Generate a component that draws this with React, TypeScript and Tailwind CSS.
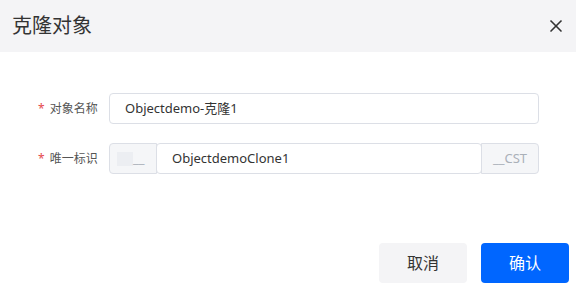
import { X } from "lucide-react";

const font = { fontFamily: '"Noto Sans", "Noto Sans CJK SC", sans-serif' };

export default function App() {
  return (
    <div className="w-[576px] h-[293px] bg-white flex flex-col" style={font}>
      <div className="h-[52px] bg-[#f4f4f6] flex items-center justify-between pl-3 pr-[10px]">
        <span className="text-[20px] text-[#333] leading-none">克隆对象</span>
        <X size={20} strokeWidth={2} className="text-[#333]" />
      </div>

      <div className="flex flex-col gap-[19px] pt-[41px] pl-[38px] pr-[37px]">
        <div className="flex items-center">
          <label className="w-[71px] text-[12px] text-[#555] flex items-center">
            <span className="text-[#e5484d] mr-[5px]">*</span>对象名称
          </label>
          <div className="flex-1 h-[31px] border border-[#dcdfe6] rounded-[4px] flex items-center pl-[15px] text-[13px] text-[#333]">
            Objectdemo-克隆1
          </div>
        </div>

        <div className="flex items-center">
          <label className="w-[71px] text-[12px] text-[#555] flex items-center">
            <span className="text-[#e5484d] mr-[5px]">*</span>唯一标识
          </label>
          <div className="flex-1 h-[31px] flex">
            <div className="w-[48px] bg-[#f5f6f8] border border-[#dcdfe6] rounded-l-[4px] flex items-center pl-[7px]">
              <div className="w-[16px] h-[14px] bg-[#eceef2]" />
              <span className="text-[13px] text-[#aab0b8] leading-none">__</span>
            </div>
            <div className="flex-1 border border-[#dcdfe6] -ml-px rounded-[4px] flex items-center pl-[15px] text-[13px] text-[#333] bg-white">
              ObjectdemoClone1
            </div>
            <div className="w-[58px] bg-[#f5f6f8] border border-[#dcdfe6] -ml-px rounded-r-[4px] flex items-center justify-center text-[13px] text-[#aab0b8]">
              __CST
            </div>
          </div>
        </div>
      </div>

      <div className="flex-1" />

      <div className="flex justify-end gap-[14px] pr-[7px] pb-[10px]">
        <button className="w-[88px] h-[40px] bg-[#f4f4f6] rounded-[4px] text-[16px] text-[#333]">
          取消
        </button>
        <button className="w-[88px] h-[40px] bg-[#0066ff] rounded-[4px] text-[16px] text-white">
          确认
        </button>
      </div>
    </div>
  );
}
